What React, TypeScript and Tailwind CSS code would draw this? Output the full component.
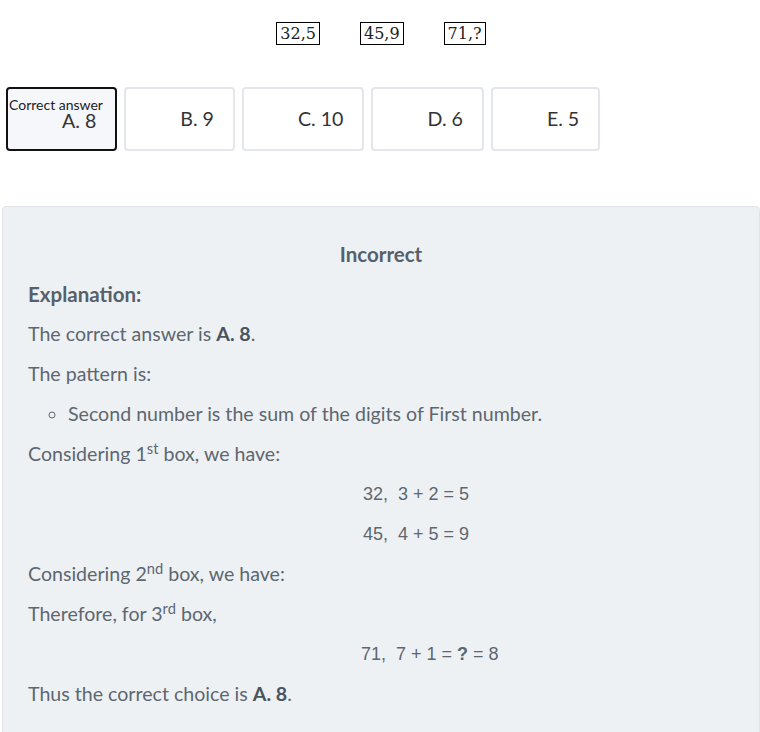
import React from 'react';

const options = ['A. 8', 'B. 9', 'C. 10', 'D. 6', 'E. 5'];
const boxes = ['32,5', '45,9', '71,?'];

export default function App() {
  return (
    <div className="w-[760px] min-h-[732px] bg-white font-['Lato',sans-serif] overflow-hidden">
      {/* number boxes */}
      <div className="flex justify-center gap-10 pt-[22px] pl-[2px]">
        {boxes.map((b) => (
          <span
            key={b}
            className="border border-black px-[3px] h-[23px] leading-[21px] text-[16px] text-[#222] font-['DejaVu_Serif',serif]"
          >
            {b}
          </span>
        ))}
      </div>

      {/* answer options */}
      <div className="flex gap-[7px] pl-[6px] mt-[42px]">
        {options.map((o, i) => (
          <div
            key={o}
            className={
              i === 0
                ? 'relative h-[64px] flex items-center pl-[54px] pr-[19px] rounded-[4px] border-2 border-[#111] bg-[#f5f7fb] text-[19.6px] text-[#333]'
                : 'relative h-[64px] flex items-center pl-[54px] pr-[19px] rounded-[4px] border-2 border-[#e3e7ec] bg-white text-[19.6px] text-[#333]'
            }
          >
            {i === 0 && (
              <span className="absolute left-[1px] top-[8px] text-[14px] leading-[16px] text-[#222]">Correct answer</span>
            )}
            <span className={i === 0 ? 'pt-[3px]' : ''}>{o}</span>
          </div>
        ))}
      </div>

      {/* explanation panel */}
      <div className="mt-[55px] ml-[2px] w-[758px] rounded-[4px] border border-[#e1e5ea] bg-[#eef1f4] pt-[27px] px-[25px] pb-10 text-[19.6px] leading-[40px] text-[#5d6770]">
        <div className="text-center font-bold text-[20.5px] text-[#56606a]">Incorrect</div>
        <div className="font-bold text-[20.5px] text-[#56606a]">Explanation:</div>
        <div>
          The correct answer is <b className="text-[#4a545e]">A. 8</b>.
        </div>
        <div>The pattern is:</div>
        <ul className="list-[circle] pl-10">
          <li>Second number is the sum of the digits of First number.</li>
        </ul>
        <div>
          Considering 1<sup>st</sup> box, we have:
        </div>
        <div className="pl-[335px] font-['Liberation_Sans',sans-serif] text-[18px]">32,&nbsp; 3 + 2 = 5</div>
        <div className="pl-[335px] font-['Liberation_Sans',sans-serif] text-[18px]">45,&nbsp; 4 + 5 = 9</div>
        <div>
          Considering 2<sup>nd</sup> box, we have:
        </div>
        <div>
          Therefore, for 3<sup>rd</sup> box,
        </div>
        <div className="pl-[333px] font-['Liberation_Sans',sans-serif] text-[18px]">
          71,&nbsp; 7 + 1 = <b>?</b> = 8
        </div>
        <div>
          Thus the correct choice is <b className="text-[#4a545e]">A. 8</b>.
        </div>
      </div>
    </div>
  );
}
